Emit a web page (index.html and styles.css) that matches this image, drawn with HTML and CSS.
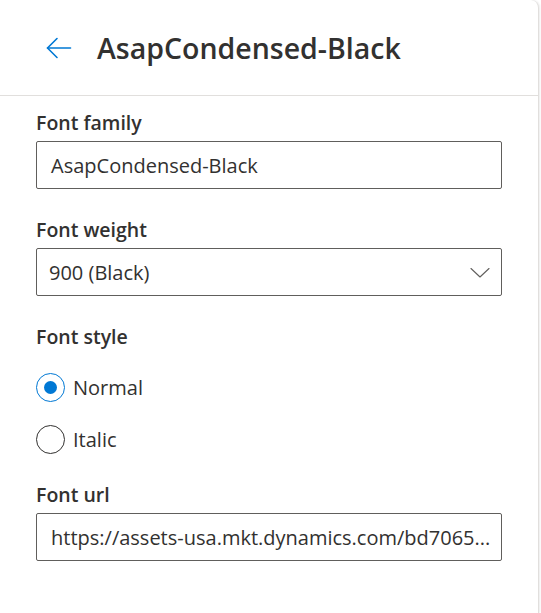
FILE: index.html
```html
<!DOCTYPE html>
<html lang="en">
<head>
<meta charset="utf-8">
<title>Font settings</title>
<link rel="stylesheet" href="styles.css">
</head>
<body>
<div class="panel">
  <header class="header">
    <button class="back" aria-label="Back">
      <svg width="26" height="22" viewBox="0 0 26 22" fill="none" stroke="#0078d4" stroke-width="1.6" stroke-linecap="round" stroke-linejoin="round">
        <path d="M1.5 11 H24.5"/>
        <path d="M11 1.5 L1.5 11 L11 20.5"/>
      </svg>
    </button>
    <h1 class="title">AsapCondensed-Black</h1>
  </header>
  <main class="content">
    <div class="field">
      <label class="label">Font family</label>
      <div class="box"><span class="value">AsapCondensed-Black</span></div>
    </div>
    <div class="field">
      <label class="label">Font weight</label>
      <div class="box select">
        <span class="value">900 (Black)</span>
        <svg class="chev" width="20" height="11" viewBox="0 0 20 11" fill="none" stroke="#605e5c" stroke-width="1.1" stroke-linecap="round" stroke-linejoin="round">
          <path d="M1 1.5 L10 10 L19 1.5"/>
        </svg>
      </div>
    </div>
    <div class="field">
      <label class="label">Font style</label>
      <div class="radios">
        <div class="radio checked"><span class="circle"></span><span class="rtext">Normal</span></div>
        <div class="radio"><span class="circle"></span><span class="rtext">Italic</span></div>
      </div>
    </div>
    <div class="field">
      <label class="label">Font url</label>
      <div class="box"><span class="value ellipsis">https://assets-usa.mkt.dynamics.com/bd7065...</span></div>
    </div>
  </main>
</div>
</body>
</html>
```

FILE: styles.css
```css
* { box-sizing: border-box; }
html, body {
  margin: 0;
  padding: 0;
  background: #ffffff;
}
body {
  font-family: "Open Sans", "Noto Sans", sans-serif;
  color: #323130;
}
.panel {
  width: 539px;
  height: 613px;
  background: #fff;
  border-right: 1px solid #e1dfdd;
  border-top-right-radius: 8px;
  box-shadow: 1px 0 2px rgba(0,0,0,0.08);
}
.header {
  height: 96px;
  border-bottom: 1px solid #e1dfdd;
  display: flex;
  align-items: center;
  padding-left: 46px;
}
.back {
  border: 0;
  background: none;
  padding: 0;
  margin: 0 25px 0 0;
  display: flex;
  align-items: center;
  cursor: pointer;
}
.title {
  margin: 0;
  font-size: 28.5px;
  font-weight: 600;
  line-height: 36px;
  color: #323130;
}
.content {
  padding: 15px 36px 0 36px;
  display: flex;
  flex-direction: column;
  gap: 29px;
}
.field {
  display: flex;
  flex-direction: column;
}
.label {
  font-size: 19.5px;
  font-weight: 600;
  line-height: 24px;
  margin-bottom: 6px;
}
.box {
  height: 48px;
  border: 1px solid #605e5c;
  border-radius: 2px;
  display: flex;
  align-items: center;
  padding: 0 10px 0 14px;
  font-size: 20px;
}
.value {
  white-space: nowrap;
}
.ellipsis {
  overflow: hidden;
  text-overflow: ellipsis;
  min-width: 0;
}
.select {
  justify-content: space-between;
  padding-left: 12px;
  padding-right: 11px;
}
.radios {
  display: flex;
  flex-direction: column;
  gap: 23px;
  padding-top: 18px;
}
.radio {
  display: flex;
  align-items: center;
  height: 29px;
  font-size: 20px;
}
.circle {
  width: 29px;
  height: 29px;
  border-radius: 50%;
  border: 1px solid #323130;
  display: flex;
  align-items: center;
  justify-content: center;
  margin-right: 8px;
}
.radio.checked .circle {
  border-color: #0078d4;
}
.radio.checked .circle::after {
  content: "";
  width: 13px;
  height: 13px;
  border-radius: 50%;
  background: #0078d4;
}
```
